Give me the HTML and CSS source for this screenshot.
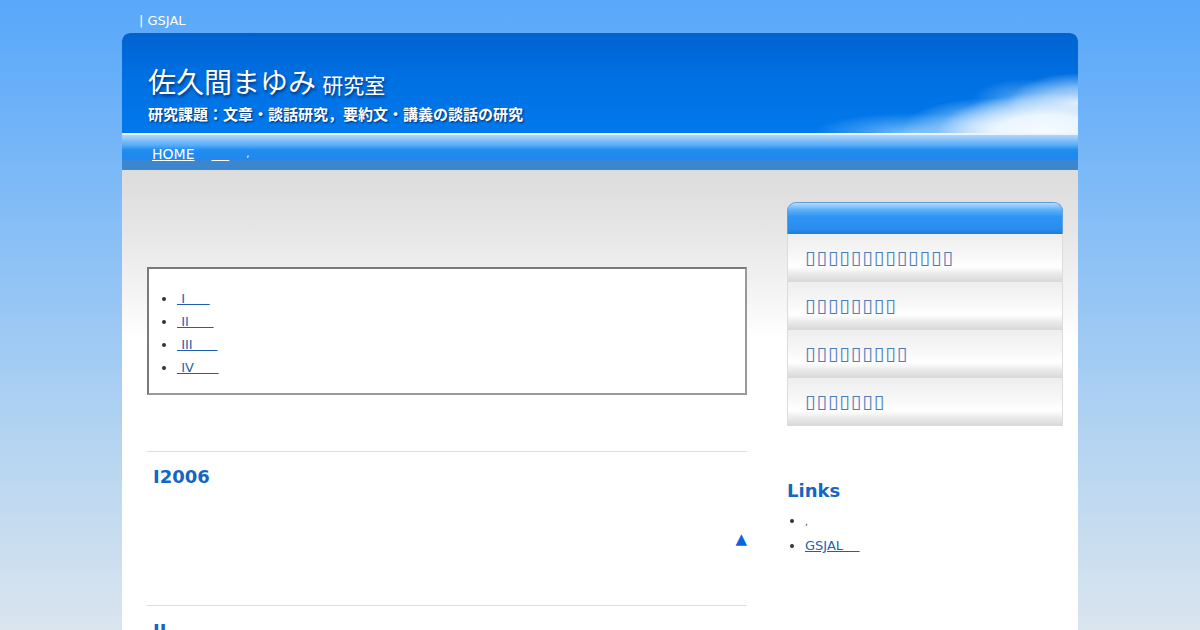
FILE: index.html
```html
<!DOCTYPE html>
<html lang="ja">
<head>
<meta charset="utf-8">
<title>佐久間まゆみ 研究室</title>
<link rel="stylesheet" href="styles.css">
</head>
<body>
<div class="topbar">| GSJAL</div>
<div class="wrap">
  <header class="header">
    <h1 class="title">佐久間まゆみ <span class="title-sub">研究室</span></h1>
    <p class="theme">研究課題：文章・談話研究，要約文・講義の談話の研究</p>
  </header>
  <nav class="nav">
    <a href="#">HOME</a>
    <a href="#" class="blank">&nbsp;&nbsp;&nbsp;&nbsp;</a>
    <span class="comma">,</span>
  </nav>
  <div class="content">
    <main class="main">
      <div class="toc">
        <ul>
          <li><a href="#">&nbsp;I&nbsp;&nbsp;&nbsp;&nbsp;&nbsp;&nbsp;</a></li>
          <li><a href="#">&nbsp;II&nbsp;&nbsp;&nbsp;&nbsp;&nbsp;&nbsp;</a></li>
          <li><a href="#">&nbsp;III&nbsp;&nbsp;&nbsp;&nbsp;&nbsp;&nbsp;</a></li>
          <li><a href="#">&nbsp;IV&nbsp;&nbsp;&nbsp;&nbsp;&nbsp;&nbsp;</a></li>
        </ul>
      </div>
      <section class="sec">
        <h2 class="sec-title">I2006</h2>
        <div class="totop">▲</div>
      </section>
      <section class="sec">
        <h2 class="sec-title">II</h2>
      </section>
    </main>
    <aside class="side">
      <div class="side-head"></div>
      <ul class="menu">
        <li><a href="#">▯▯▯▯▯▯▯▯▯▯▯▯▯</a></li>
        <li><a href="#">▯▯▯▯▯▯▯▯</a></li>
        <li><a href="#">▯▯▯▯▯▯▯▯▯</a></li>
        <li><a href="#">▯▯▯▯▯▯▯</a></li>
      </ul>
      <h3 class="links-title">Links</h3>
      <ul class="links">
        <li><span class="comma-dark">,</span></li>
        <li><a href="#">GSJAL&nbsp;&nbsp;&nbsp;&nbsp;</a></li>
      </ul>
    </aside>
  </div>
</div>
</body>
</html>
```

FILE: styles.css
```css
html, body {
  margin: 0;
  padding: 0;
}
body {
  height: 630px;
  overflow: hidden;
  background: linear-gradient(to bottom, #5aa8fb 0px, #5fabfa 40px, #b6d5f1 450px, #dae5ee 630px);
  font-family: "DejaVu Sans", "Noto Sans CJK JP", sans-serif;
  font-size: 13px;
  color: #333;
}
.topbar {
  width: 956px;
  margin: 0 auto;
  height: 33px;
  box-sizing: border-box;
  padding: 13px 0 0 17px;
  color: #fff;
  font-size: 13px;
  line-height: 16px;
}
.wrap {
  width: 956px;
  margin: 0 auto;
  background: #fff;
  border-radius: 8px 8px 0 0;
  min-height: 597px;
}
.header {
  height: 100px;
  box-sizing: border-box;
  padding: 30px 0 0 26px;
  border-radius: 8px 8px 0 0;
  background:
    radial-gradient(ellipse 110px 40px at 925px 100px, rgba(248,252,255,1) 0%, rgba(240,248,255,0.95) 45%, rgba(230,244,255,0) 100%),
    radial-gradient(ellipse 70px 30px at 956px 70px, rgba(235,245,255,0.9) 0%, rgba(220,238,255,0.6) 50%, rgba(220,238,255,0) 100%),
    radial-gradient(ellipse 90px 30px at 870px 95px, rgba(215,236,255,0.85) 0%, rgba(200,230,255,0.5) 50%, rgba(200,230,255,0) 100%),
    radial-gradient(ellipse 100px 20px at 790px 100px, rgba(160,212,255,0.75) 0%, rgba(160,212,255,0.3) 55%, rgba(160,212,255,0) 100%),
    radial-gradient(ellipse 50px 22px at 900px 68px, rgba(180,220,255,0.5) 0%, rgba(180,220,255,0) 100%),
    linear-gradient(to bottom, #0062cf 0%, #0070e2 45%, #0079ec 100%);
  color: #fff;
}
.title {
  margin: 0;
  font-family: "Noto Sans CJK JP", sans-serif;
  font-weight: 400;
  font-size: 28px;
  line-height: 36px;
  text-shadow: 1px 2px 3px rgba(0, 20, 70, 0.7);
}
.title-sub {
  font-size: 21px;
}
.theme {
  margin: 2px 0 0 0;
  font-family: "Noto Sans CJK JP", sans-serif;
  font-weight: 700;
  font-size: 15px;
  line-height: 20px;
  text-shadow: 1px 1px 2px rgba(0, 20, 70, 0.8);
}
.nav {
  height: 37px;
  box-sizing: border-box;
  border-top: 2px solid #e8f4ff;
  background: linear-gradient(to bottom, #b0d6fb 0px, #5aacf8 10px, #1f8df1 15px, #2088ec 24px, #3a86d2 26px, #3d86cc 35px);
  padding: 11px 0 0 30px;
  line-height: 16px;
  display: flex;
  gap: 17px;
}
.nav a {
  color: #fff;
  font-size: 14px;
}
.nav .comma {
  color: #fff;
  font-size: 10px;
}
.content {
  display: flex;
  background: linear-gradient(to bottom, #dcdcdc 0px, #e6e6e6 60px, #fafafa 150px, #ffffff 170px);
  height: 460px;
}
.main {
  width: 600px;
  margin-left: 25px;
  padding-top: 97px;
}
.toc {
  border: 2px solid #7a7a7a;
  border-right-color: #999;
  border-bottom-color: #999;
  background: #fff;
  height: 128px;
  box-sizing: border-box;
}
.toc ul {
  margin: 18px 0 0 0;
  padding-left: 28px;
}
.toc li {
  line-height: 23px;
}
a {
  color: #1a5fb4;
}
.sec {
  border-top: 1px solid #dedede;
  margin-top: 56px;
  height: 153px;
}
.sec + .sec {
  margin-top: 0;
}
.sec-title {
  margin: 0;
  padding: 14px 0 0 6px;
  font-size: 18px;
  line-height: 22px;
  font-weight: 700;
  color: #1466c2;
}
.totop {
  text-align: right;
  margin-top: 41px;
  color: #0a63e0;
  font-size: 15px;
  line-height: 20px;
}
.side {
  width: 276px;
  margin-left: 40px;
  padding-top: 32px;
}
.side-head {
  height: 32px;
  box-sizing: border-box;
  border: 1px solid #5d9fd6;
  border-bottom: none;
  border-radius: 9px 9px 0 0;
  background: linear-gradient(to bottom, #b9dcfc 0px, #5cb0fa 7px, #2e93f3 14px, #2a8ef0 25px, #1f7dd8 31px);
}
.menu {
  list-style: none;
  margin: 0;
  padding: 0;
  border-left: 1px solid #dcdcdc;
  border-right: 1px solid #dcdcdc;
}
.menu li {
  height: 48px;
  box-sizing: border-box;
  background: linear-gradient(to bottom, #eeeeee 0%, #f5f5f5 35%, #ffffff 68%, #e8e8e8 85%, #d8d8d8 100%);
  padding: 12px 0 0 17px;
}
.menu a {
  text-decoration: none;
  color: #4a7cb8;
  font-size: 19px;
  letter-spacing: 1px;
  line-height: 22px;
}
.links-title {
  margin: 54px 0 0 0;
  font-size: 18px;
  line-height: 22px;
  color: #1466c2;
  font-weight: 700;
}
.links {
  margin: 7px 0 0 0;
  padding-left: 18px;
}
.links li {
  line-height: 23px;
}
.comma-dark {
  font-size: 9px;
}
```
